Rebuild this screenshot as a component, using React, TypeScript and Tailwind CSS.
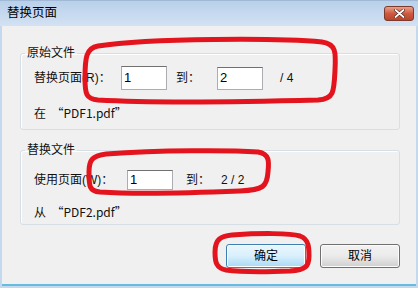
import React from 'react'

const cjk = { fontFamily: '"Liberation Sans", "Noto Sans CJK SC", sans-serif' }
const cjkFirst = { fontFamily: '"Noto Sans CJK SC", sans-serif' }

function Input({ value, h }: { value: string; h: string }) {
  return (
    <div
      className={`w-[46px] ${h} bg-white border border-[#abadb3] border-t-[#707070] flex items-center pl-[2px] text-[13px] text-black`}
    >
      {value}
    </div>
  )
}

export default function App() {
  return (
    <div className="relative w-[418px] h-[288px] bg-[#c5d9ee] flex flex-col overflow-hidden" style={cjk}>
      {/* title bar */}
      <div className="h-[26px] flex items-center justify-between pl-[7px] pr-[4px] bg-gradient-to-b from-[#b9d0ea] to-[#d3e2f3] border-t border-[#9fb9d6]">
        <span className="text-[12.5px] text-black">替换页面</span>
        <div className="w-[30px] h-[15px] rounded-[3px] border border-[#7a3a2c] bg-gradient-to-b from-[#e7a08c] via-[#cf5a3e] to-[#b8452c] flex items-center justify-center">
          <svg width="11" height="9" viewBox="0 0 11 9">
            <path d="M1.5 1 L9.5 8 M9.5 1 L1.5 8" stroke="#4a1c14" strokeWidth="3" strokeLinecap="round" />
            <path d="M1.5 1 L9.5 8 M9.5 1 L1.5 8" stroke="#fff" strokeWidth="1.8" strokeLinecap="round" />
          </svg>
        </div>
      </div>

      {/* client area */}
      <div className="flex-1 ml-[2px] mr-[2px] mb-[2px] bg-[#f0f0f0] border-b-2 border-[#64bde0] flex flex-col text-[12px] text-[#111]">
        <fieldset className="mt-[19px] ml-[18px] mr-[16px] border border-[#d5dfe5] rounded-[3px] pl-[13px] pb-[8px] shadow-[inset_1px_1px_0_#fff]">
          <legend className="-ml-[9px] px-[2px] leading-[16px]">原始文件</legend>
          <div className="mt-[5px] flex items-center">
            <span className="w-[87px]">替换页面(R)：</span>
            <Input value="1" h="h-[24px]" />
            <span className="ml-[9px] w-[41px]">到：</span>
            <Input value="2" h="h-[23px]" />
            <span className="ml-[17px]">/ 4</span>
          </div>
          <div className="mt-[15px] leading-[16px]" style={cjkFirst}>在{'\u00a0\u00a0'}“PDF1.pdf”</div>
        </fieldset>

        <fieldset className="mt-[12px] ml-[18px] mr-[16px] border border-[#d5dfe5] rounded-[3px] pl-[13px] pb-[4px] shadow-[inset_1px_1px_0_#fff]">
          <legend className="-ml-[9px] px-[2px] leading-[16px]">替换文件</legend>
          <div className="mt-[12px] flex items-center">
            <span className="w-[93px]">使用页面(W)：</span>
            <Input value="1" h="h-[20px]" />
            <span className="ml-[13px] w-[35px]">到：</span>
            <span>2 / 2</span>
          </div>
          <div className="mt-[14px] leading-[16px]" style={cjkFirst}>从{'\u00a0\u00a0'}“PDF2.pdf”</div>
        </fieldset>

        <div className="mt-[19px] mr-[16px] flex justify-end gap-[14px]">
          <button className="w-[80px] h-[24px] rounded-[3px] border border-[#3c7fb1] bg-gradient-to-b from-[#eaf6fd] via-[#d9f0fc] to-[#a7d9f5] shadow-[inset_0_0_0_1px_#ffffff] text-[12px] text-black">
            确定
          </button>
          <button className="w-[80px] h-[24px] rounded-[3px] border border-[#707070] bg-gradient-to-b from-[#f2f2f2] via-[#ebebeb] to-[#cfcfcf] shadow-[inset_0_0_0_1px_#fcfcfc] text-[12px] text-black">
            取消
          </button>
        </div>
      </div>

      {/* red hand-drawn annotations */}
      <svg className="absolute inset-0 pointer-events-none" width="418" height="288" viewBox="0 0 418 288">
        <g fill="none" stroke="#e3141d" strokeWidth="5" strokeLinecap="round" strokeLinejoin="round">
          <path d="M98 46 C150 38 280 38 322 42 C336 44 336 52 335 70 C334 92 334 99 318 100 C240 102 150 103 98 100 C86 99 85 94 85 78 C85 58 86 48 98 46 Z" />
          <path d="M106 154 C160 150 230 150 258 152 C270 154 269 162 268 172 C267 186 264 190 240 191 C190 193 130 194 100 192 C89 191 89 186 89 172 C89 160 92 156 106 154 Z" />
          <path d="M232 235 C260 233 290 233 300 236 C309 239 309 248 309 256 C309 266 306 270 290 271 C265 272 240 272 226 270 C216 268 215 262 215 252 C215 240 220 236 232 235 Z" />
        </g>
      </svg>
    </div>
  )
}
